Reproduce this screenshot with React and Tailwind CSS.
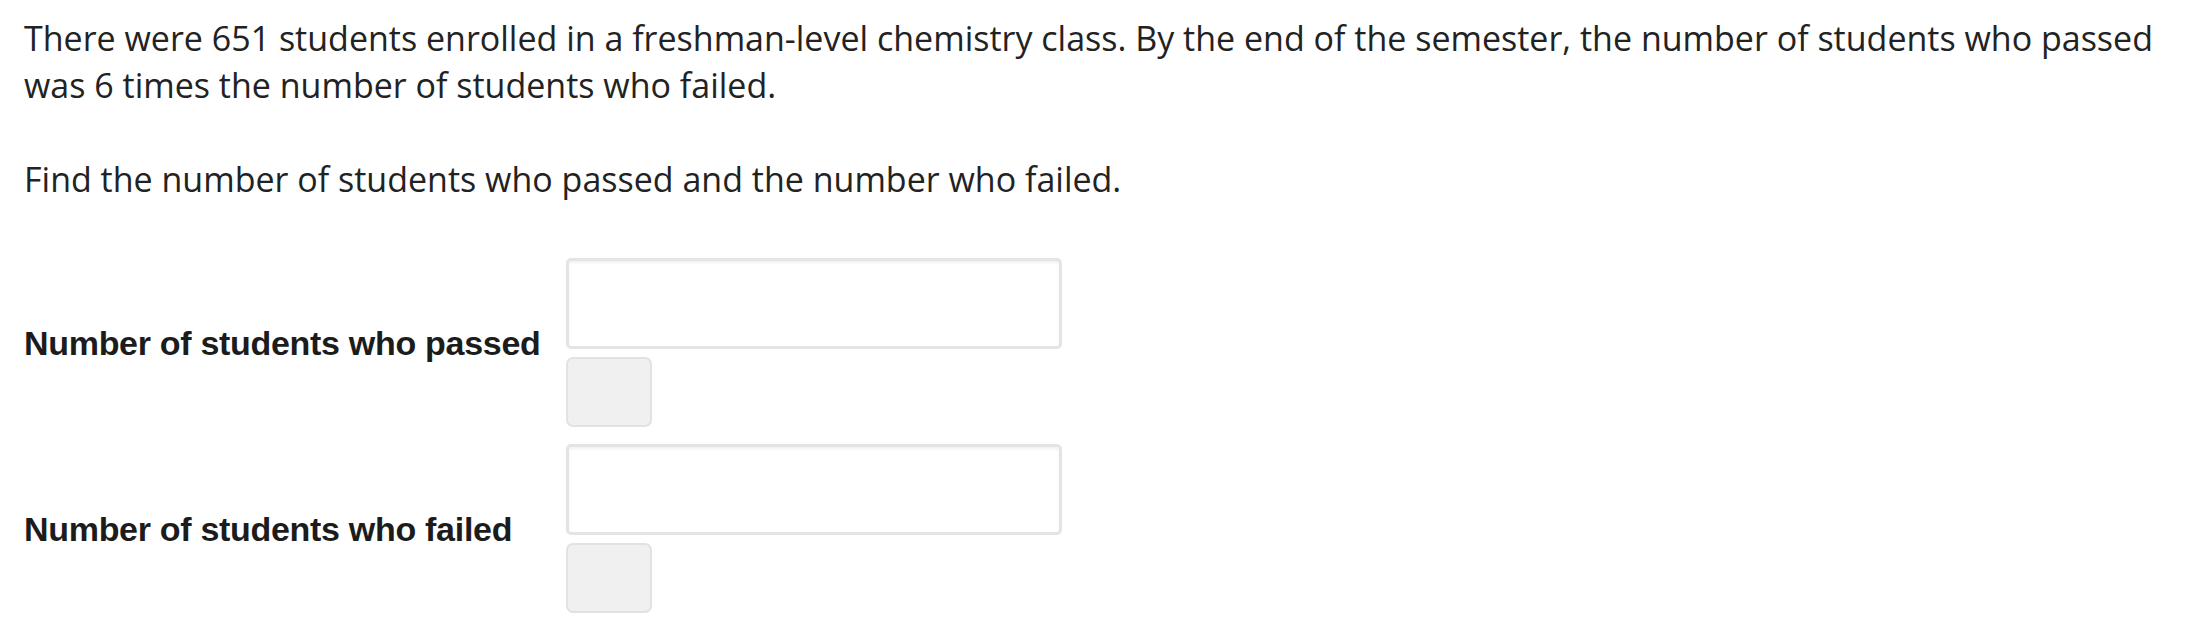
import React from 'react'

const ROWS = ['Number of students who passed', 'Number of students who failed']

function AnswerRow({ label }) {
  return (
    <div className="flex items-center">
      <label className="w-[542px] shrink-0 font-['Liberation_Sans',Arial,sans-serif] font-bold text-[34px] leading-[40px] tracking-[-0.3px] text-[#1c1c1c]">
        {label}
      </label>
      <div className="flex flex-col gap-2">
        <input
          type="text"
          className="w-[496px] h-[91px] rounded-[5px] border-[3px] border-[#e4e4e4] bg-white shadow-[inset_0_2px_3px_rgba(0,0,0,0.06)] outline-none"
        />
        <div className="w-[86px] h-[70px] rounded-[7px] border-2 border-[#e2e2e2] bg-[#f0f0f0]" />
      </div>
    </div>
  )
}

export default function App() {
  return (
    <div className="min-h-screen bg-white pl-6 pt-[15px] font-['Open_Sans',sans-serif] text-[34px] leading-[47px] text-[#222]">
      <p>
        There were 651 students enrolled in a freshman-level chemistry class. By the end of the semester, the number of students who passed
        <br />
        was 6 times the number of students who failed.
      </p>
      <p className="mt-[47px]">Find the number of students who passed and the number who failed.</p>

      <div className="mt-[55px] flex flex-col gap-[17px]">
        {ROWS.map((r) => (
          <AnswerRow key={r} label={r} />
        ))}
      </div>
    </div>
  )
}
